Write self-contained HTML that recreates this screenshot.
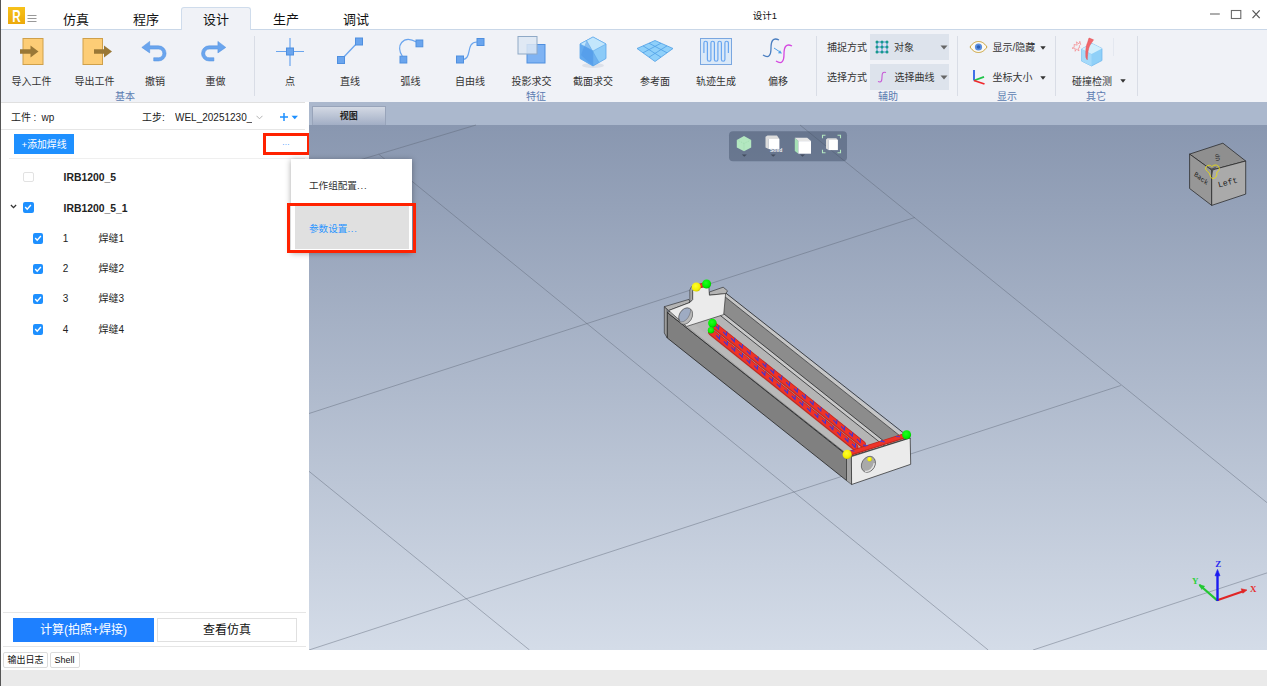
<!DOCTYPE html>
<html lang="zh-CN">
<head>
<meta charset="utf-8">
<title>设计1</title>
<style>
*{box-sizing:border-box;margin:0;padding:0}
html,body{width:1267px;height:686px;overflow:hidden;background:#fff}
body{font-family:"Liberation Sans","Noto Sans CJK SC",sans-serif;color:#222;position:relative;font-size:10px}
.abs{position:absolute}
#leftedge{left:0;top:0;width:1px;height:686px;background:#555;z-index:50}
#titlebar{left:0;top:0;width:1267px;height:30px;background:#fff;border-bottom:1px solid #c9d7e8}
.tab{position:absolute;top:7px;height:23px;width:70px;text-align:center;font-size:13px;line-height:25px;color:#111}
.tab.active{background:#f0f2f7;border:1px solid #cfdcec;border-bottom:none;border-radius:3px 3px 0 0;height:24px;line-height:23px}
#ribbon{left:0;top:30px;width:1267px;height:72px;background:#f0f2f7}
.rb{position:absolute;top:0;width:62px;height:73px;text-align:center}
.rb .lbl{position:absolute;left:-10px;right:-10px;top:46px;font-size:10px;line-height:12px;color:#333;text-align:center}
.rb svg{position:absolute;left:50%;top:4px;margin-left:-16px;overflow:visible}
.glabel{position:absolute;top:60.500px;font-size:10px;line-height:12px;color:#5b7bb0;width:40px;margin-left:-20px;text-align:center}
.rtxt{font-size:10px;line-height:12px;color:#333;white-space:nowrap}
.dd{width:79px;height:26px;background:#dde3ec}
.vsep{position:absolute;top:6px;width:1px;height:60px;background:#d9dde6}
#left{left:1px;top:102px;width:308px;height:548px;background:#fff}
#view{left:309px;top:102px;width:958px;height:547.500px;background:linear-gradient(#8997b0 0,#8997b0 23px,#d4dce8 100%);overflow:hidden}
#viewtabs{left:0;top:0;width:958px;height:23px;background:#abb8cd}

#left .t{position:absolute;font-size:10px;line-height:12px;white-space:nowrap;color:#222}
.hl{position:absolute;height:1px;background:#e6e6e6}
.cb{position:absolute;width:10.500px;height:10.500px;border-radius:2px}
.cb.on{background:#1e90ff}
.cb.off{border:1px solid #e2e2e2;background:#fff}
.cb.on svg{position:absolute;left:0;top:0}
.redbox{position:absolute;border:3px solid #ff2200}
#bottom{left:0;top:650px;width:1267px;height:20px;background:#fff}
.btab{top:2px;height:16px;border:1px solid #dcdcdc;border-radius:2px;font-size:9px;line-height:14px;text-align:center;color:#111;white-space:nowrap}
#status{left:0;top:670px;width:1267px;height:16px;background:#eaeaea}
</style>
</head>
<body>
<div id="titlebar" class="abs">
<div class="abs" style="left:8px;top:7px;width:17px;height:17px;background:linear-gradient(#f7c21a,#eca90c);color:#fff;font-weight:bold;font-size:15px;line-height:17px;text-align:center;font-family:'Liberation Sans',sans-serif"><span style="display:inline-block;transform:scale(0.780,1.150);transform-origin:50% 55%">R</span></div>
<svg class="abs" style="left:27px;top:14px" width="10" height="10" viewBox="0 0 10 10"><path d="M0.5 1.5h9M0.5 4.5h9M0.5 7.5h9" stroke="#999" stroke-width="1" fill="none"/></svg>
<div class="tab" style="left:41px">仿真</div>
<div class="tab" style="left:111px">程序</div>
<div class="tab active" style="left:181px">设计</div>
<div class="tab" style="left:251px">生产</div>
<div class="tab" style="left:321px">调试</div>
<div class="abs" style="left:735px;top:9px;width:60px;text-align:center;font-size:9.500px;line-height:13px;color:#111">设计1</div>
<svg class="abs" style="left:1206px;top:8px" width="58" height="14" viewBox="0 0 58 14"><g fill="none"><path d="M4 6h9.800" stroke="#8a8a8a" stroke-width="1.400"/><rect x="25.400" y="2.500" width="9.400" height="8" stroke="#6a6a6a" stroke-width="1.100"/><path d="M46.500 2.300l7.200 7.800M53.700 2.300l-7.200 7.800" stroke="#555" stroke-width="1.200"/></g></svg>
</div>
<div id="ribbon" class="abs">
<div class="rb" style="left:0.5px"><svg width="32" height="36" viewBox="0 0 32 36"><rect x="7" y="4.500" width="20" height="26" fill="#fdcd76" stroke="#cfa04a"/><path d="M4 15.300h10.500v-3.800l8 6-8 6v-3.800H4z" fill="#9a7836"/></svg><div class="lbl">导入工件</div></div>
<div class="rb" style="left:63.5px"><svg width="32" height="36" viewBox="0 0 32 36"><rect x="4" y="4.500" width="19.500" height="26" fill="#fdcd76" stroke="#cfa04a"/><path d="M15 15.300h10v-3.800l8 6-8 6v-3.800H15z" fill="#9a7836"/></svg><div class="lbl">导出工件</div></div>
<div class="rb" style="left:124px"><svg width="32" height="36" viewBox="0 0 32 36"><path d="M2.800 13.400L10.700 7.400V11.800H19.500A7.600 7.600 0 0 1 19.500 27H14.700V23.700H19.500A4.300 4.300 0 0 0 19.500 15.100H10.700V18.900Z" fill="#6aa5ee" stroke="#4f8fdf" stroke-width="0.500"/></svg><div class="lbl">撤销</div></div>
<div class="rb" style="left:184.5px"><svg width="32" height="36" viewBox="0 0 32 36"><path d="M 25.800 13.400 L 17.900 7.400 V 11.800 H 9.100 A 7.600 7.600 0 0 0 9.100 27 H 13.900 V 23.700 H 9.100 A 4.300 4.300 0 0 1 9.100 15.100 H 17.900 V 18.900 Z" fill="#6aa5ee" stroke="#4f8fdf" stroke-width="0.500"/></svg><div class="lbl">重做</div></div>
<div class="rb" style="left:259px"><svg width="32" height="36" viewBox="0 0 32 36"><path d="M2 17.5h28M16 4v28" stroke="#6aa5ee" stroke-width="1.2" fill="none"/><rect x="12.5" y="14" width="7" height="7" fill="#6aa5ee" stroke="#4f8fdf"/></svg><div class="lbl">点</div></div>
<div class="rb" style="left:319px"><svg width="32" height="36" viewBox="0 0 32 36"><path d="M7 26L25 7" stroke="#6aa5ee" stroke-width="1.3" fill="none"/><rect x="3.5" y="22.5" width="7" height="7" fill="#6aa5ee" stroke="#4f8fdf"/><rect x="21.500" y="4" width="7" height="7" fill="#6aa5ee" stroke="#4f8fdf"/></svg><div class="lbl">直线</div></div>
<div class="rb" style="left:379.5px"><svg width="32" height="36" viewBox="0 0 32 36"><path d="M7.500 22.500C0 12 8 0.500 21.500 8" stroke="#6aa5ee" stroke-width="1.200" fill="none"/><rect x="5" y="22.200" width="6.800" height="6.800" fill="#6aa5ee" stroke="#4f8fdf"/><rect x="21" y="6" width="6.800" height="6.800" fill="#6aa5ee" stroke="#4f8fdf"/></svg><div class="lbl">弧线</div></div>
<div class="rb" style="left:439px"><svg width="32" height="36" viewBox="0 0 32 36"><path d="M8 25.500C19 25.500 11 8 23 8" stroke="#6aa5ee" stroke-width="1.2" fill="none"/><rect x="2.500" y="22" width="7" height="7" fill="#6aa5ee" stroke="#4f8fdf"/><rect x="23" y="4.500" width="7" height="7" fill="#6aa5ee" stroke="#4f8fdf"/></svg><div class="lbl">自由线</div></div>
<div class="rb" style="left:500.5px"><svg width="32" height="36" viewBox="0 0 32 36"><rect x="11" y="10.500" width="18" height="18.500" fill="#7fb3f3" stroke="#4f8fdf"/><rect x="2" y="2.500" width="19" height="17.500" fill="#dde8f3" fill-opacity="0.85" stroke="#8fa9c6"/></svg><div class="lbl">投影求交</div></div>
<div class="rb" style="left:562px"><svg width="32" height="36" viewBox="0 0 32 36"><ellipse cx="16" cy="31.500" rx="11" ry="2.500" fill="#dde1e9"/><path d="M16 3L29 10v14.500L16 32 3 24.500V10z" fill="#8ccbf8" stroke="#5aa6ea" stroke-width="0.800"/><path d="M16 3L29 10 16 17 3 10z" fill="#c2e6fc" stroke="#5aa6ea" stroke-width="0.600"/><path d="M3 10L16 17V32L3 24.500z" fill="#62a9ef"/><path d="M9.500 6.500L22 28.500 16 32 4 21z" fill="#4b95e8" fill-opacity="0.500"/><path d="M16 17V32M9.500 6.500L22 28.500" stroke="#5aa6ea" stroke-width="0.600" fill="none"/></svg><div class="lbl">截面求交</div></div>
<div class="rb" style="left:624px"><svg width="38" height="36" viewBox="0 0 38 36" style="margin-left:-19px"><path d="M1 14.500L19 6.500 37 14.500 19 27.500z" fill="#8fd0fa" stroke="#4f9fe6" stroke-width="0.8"/><path d="M7 11.800L25 23.200M13 9.200L31 18.800M13 23.200L31 11.800M7 18.800L25 9.200" stroke="#4f9fe6" stroke-width="0.8" fill="none"/></svg><div class="lbl">参考面</div></div>
<div class="rb" style="left:685px"><svg width="34" height="36" viewBox="0 0 34 36" style="margin-left:-17px"><rect x="1.500" y="4.500" width="31" height="26" fill="#dbe9f8" stroke="#7aa7e0"/><path d="M4.900 19V9a1.75 1.75 0 0 1 3.5 0V25.500a1.75 1.75 0 0 0 3.5 0V9a1.75 1.75 0 0 1 3.5 0V25.500a1.75 1.75 0 0 0 3.5 0V9a1.75 1.75 0 0 1 3.5 0V25.500a1.75 1.75 0 0 0 3.5 0V9a1.75 1.75 0 0 1 3.5 0V19" stroke="#69a6f0" stroke-width="1.200" fill="none"/></svg><div class="lbl">轨迹生成</div></div>
<div class="rb" style="left:747px"><svg width="34" height="36" viewBox="0 0 34 36" style="margin-left:-17px"><path d="M2 21c6 4 8 0 8-7s2-11 8-8" stroke="#4a7ec0" stroke-width="1.300" fill="none"/><path d="M15 27c6 4 8 0 8-7s2-11 8-8" stroke="#d548e0" stroke-width="1.300" fill="none"/><path d="M13 14l6 4" stroke="#4f9fe6" stroke-width="1" fill="none"/><path d="M21 19.500l-4-0.300 2-3z" fill="#4f9fe6"/></svg><div class="lbl">偏移</div></div>
<div class="vsep" style="left:254px"></div><div class="vsep" style="left:816px"></div><div class="vsep" style="left:957px"></div><div class="vsep" style="left:1055px"></div><div class="vsep" style="left:1137px"></div>
<div class="glabel" style="left:125px">基本</div><div class="glabel" style="left:536px">特征</div><div class="glabel" style="left:888px">辅助</div><div class="glabel" style="left:1007px">显示</div><div class="glabel" style="left:1096px">其它</div>

<div class="abs rtxt" style="left:827px;top:12px">捕捉方式</div>
<div class="abs rtxt" style="left:827px;top:42px">选择方式</div>
<div class="abs dd" style="left:870px;top:4px"></div>
<div class="abs dd" style="left:870px;top:34px"></div>
<svg class="abs" style="left:875px;top:10px" width="14" height="14" viewBox="0 0 14 14"><path d="M2 2h10M2 7h10M2 12h10M2 2v10M7 2v10M12 2v10" stroke="#3f8fe0" stroke-width="0.9" fill="none"/><g fill="#17998a"><circle cx="2" cy="2" r="1.500"/><circle cx="7" cy="2" r="1.500"/><circle cx="12" cy="2" r="1.500"/><circle cx="2" cy="7" r="1.500"/><circle cx="7" cy="7" r="1.500"/><circle cx="12" cy="7" r="1.500"/><circle cx="2" cy="12" r="1.500"/><circle cx="7" cy="12" r="1.500"/><circle cx="12" cy="12" r="1.500"/></g></svg>
<div class="abs rtxt" style="left:894px;top:12px">对象</div>
<svg class="abs" style="left:940px;top:15px" width="8" height="5" viewBox="0 0 8 5"><path d="M0.500 0.500h7L4 4.500z" fill="#666"/></svg>
<svg class="abs" style="left:877px;top:40px" width="10" height="14" viewBox="0 0 10 14"><path d="M1 11.500c3.500 1.500 4-1 4-4.500s0.500-5.500 4-4.500" stroke="#c75ad6" stroke-width="1.100" fill="none"/></svg>
<div class="abs rtxt" style="left:894.500px;top:42px">选择曲线</div>
<svg class="abs" style="left:940px;top:45px" width="8" height="5" viewBox="0 0 8 5"><path d="M0.500 0.500h7L4 4.500z" fill="#666"/></svg>
<svg class="abs" style="left:969px;top:10px" width="19" height="14" viewBox="0 0 19 14"><path d="M1 7C4 2.500 7 1.500 9.500 1.500S15 2.500 18 7C15 11.500 12 12.500 9.500 12.500S4 11.500 1 7z" fill="#fdfaf2" stroke="#c9a035" stroke-width="1"/><circle cx="9.500" cy="7" r="3.600" fill="#5a8fe0"/><circle cx="9.500" cy="7" r="1.800" fill="#2c5fb8"/></svg>
<div class="abs rtxt" style="left:992.500px;top:12px">显示/隐藏</div>
<svg class="abs" style="left:1040px;top:16px" width="6" height="4" viewBox="0 0 6 4"><path d="M0.300 0.300h5.400L3 3.700z" fill="#333"/></svg>
<svg class="abs" style="left:971px;top:38px" width="16" height="18" viewBox="0 0 16 18"><path d="M3 2v10.500" stroke="#2d62e6" stroke-width="1.800" fill="none"/><path d="M3 12.500l10-3.700" stroke="#1fc44a" stroke-width="1.800" fill="none"/><path d="M3 12.500l10.500 3.500" stroke="#f0282d" stroke-width="1.800" fill="none"/></svg>
<div class="abs rtxt" style="left:992.500px;top:42px">坐标大小</div>
<svg class="abs" style="left:1040px;top:46px" width="6" height="4" viewBox="0 0 6 4"><path d="M0.300 0.300h5.400L3 3.700z" fill="#333"/></svg>
<svg class="abs" style="left:1072px;top:5px" width="34" height="34" viewBox="0 0 34 34"><path d="M9.500 14l10.500-5.500 10 5v12L19.500 31 9.500 26z" fill="#8fd0f8" stroke="#6ab4ee" stroke-width="0.700"/><path d="M9.500 14l10.500-5.500 10 5-10.500 5.500z" fill="#d2effd"/><path d="M9.500 14l10 5.500V31l-10-5z" fill="#a5dafa"/><path d="M17 3l4.500 1.800-3 4.500c-2 3-2.800 7-3.300 15.500l-1.300-2.500c-0.300-7 0-11 1.800-15z" fill="#f2666b" stroke="#e0484e" stroke-width="0.500"/><path d="M2 9.500l3.200 0.600-0.800-3.200 2.600 2 0.800-2.600 1 3-1.600 1.600 0.600 1.600-1.600 0.600 0.800 2.800-2.600-1.800-1.200 2.200-0.200-3.200-3 0.200 2.400-1.800z" stroke="#f5868b" stroke-width="0.700" fill="none" stroke-linejoin="round"/></svg>
<div class="abs" style="left:1113px;top:8px;width:1px;height:18px;background:#e4e8f0"></div>
<div class="abs rtxt" style="left:1072px;top:45.500px">碰撞检测</div>
<svg class="abs" style="left:1120px;top:49px" width="6" height="4" viewBox="0 0 6 4"><path d="M0.300 0.300h5.400L3 3.700z" fill="#333"/></svg>

</div>
<div id="left" class="abs">
<div class="hl" style="left:0;top:0;width:304px;background:#e0e0e0"></div><div class="t" style="left:10px;top:9.5px">工件<span style="margin-left:2.500px;margin-right:2.500px">:</span> wp</div><div class="t" style="left:141px;top:9.5px">工步:</div><div class="t" style="left:174px;top:9.5px;width:77px;overflow:hidden">WEL_20251230_1</div><svg class="abs" style="left:255px;top:13px" width="7" height="5" viewBox="0 0 7 5"><path d="M0.500 0.800l3 3 3-3" stroke="#aaa" stroke-width="0.900" fill="none"/></svg><svg class="abs" style="left:278px;top:10px" width="20" height="10" viewBox="0 0 20 10"><path d="M1 5h8M5 1v8" stroke="#1e90ff" stroke-width="1.500" fill="none"/><path d="M12.500 3.800h6.500l-3.250 3.400z" fill="#1e90ff"/></svg><div class="hl" style="left:0;top:27px;width:304px"></div><div class="abs" style="left:13px;top:32px;width:60px;height:20px;background:#1e90ff;color:#fff;font-size:9.800px;line-height:22px;text-align:center;white-space:nowrap">+添加焊线</div><div class="redbox" style="left:262px;top:30.500px;width:46.500px;height:22.500px"></div><div class="abs" style="left:275px;top:35px;width:20px;text-align:center;color:#1e90ff;font-size:8px;line-height:12px;letter-spacing:0.300px">...</div><div class="hl" style="left:8px;top:55.5px;width:296px;background:#efefef"></div><div class="cb off" style="left:22px;top:69.500px"></div><div class="t" style="left:62.5px;top:70px;font-weight:bold;font-size:10.400px">IRB1200_5</div><svg class="abs" style="left:9px;top:102px" width="7" height="5" viewBox="0 0 7 5"><path d="M0.900 1l2.600 2.600 2.600-2.600" stroke="#333" stroke-width="1.300" fill="none"/></svg><div class="cb on" style="left:22px;top:100px"><svg width="10" height="10" viewBox="0 0 10 10"><path d="M2.200 5l2 2.200 3.700-4.200" stroke="#fff" stroke-width="1.400" fill="none"/></svg></div><div class="t" style="left:62.5px;top:100.500px;font-weight:bold;font-size:10.400px">IRB1200_5_1</div><div class="cb on" style="left:31.799999999999997px;top:131.30px"><svg width="10" height="10" viewBox="0 0 10 10"><path d="M2.200 5l2 2.200 3.700-4.200" stroke="#fff" stroke-width="1.400" fill="none"/></svg></div><div class="t" style="left:61.8px;top:130.80px;font-size:10px">1</div><div class="t" style="left:97.5px;top:130.80px;font-size:10px">焊缝1</div><div class="cb on" style="left:31.799999999999997px;top:161.55px"><svg width="10" height="10" viewBox="0 0 10 10"><path d="M2.200 5l2 2.200 3.700-4.200" stroke="#fff" stroke-width="1.400" fill="none"/></svg></div><div class="t" style="left:61.8px;top:161.05px;font-size:10px">2</div><div class="t" style="left:97.5px;top:161.05px;font-size:10px">焊缝2</div><div class="cb on" style="left:31.799999999999997px;top:191.80px"><svg width="10" height="10" viewBox="0 0 10 10"><path d="M2.200 5l2 2.200 3.700-4.200" stroke="#fff" stroke-width="1.400" fill="none"/></svg></div><div class="t" style="left:61.8px;top:191.30px;font-size:10px">3</div><div class="t" style="left:97.5px;top:191.30px;font-size:10px">焊缝3</div><div class="cb on" style="left:31.799999999999997px;top:222.05px"><svg width="10" height="10" viewBox="0 0 10 10"><path d="M2.200 5l2 2.200 3.700-4.200" stroke="#fff" stroke-width="1.400" fill="none"/></svg></div><div class="t" style="left:61.8px;top:221.55px;font-size:10px">4</div><div class="t" style="left:97.5px;top:221.55px;font-size:10px">焊缝4</div><div class="hl" style="left:2px;top:510px;width:303px"></div><div class="abs" style="left:12px;top:516px;width:141px;height:24px;background:#1e80ff;color:#fff;font-size:12px;line-height:25px;text-align:center">计算(拍照+焊接)</div><div class="abs" style="left:156px;top:516px;width:140px;height:24px;background:#fff;border:1px solid #e0e0e0;color:#111;font-size:12px;line-height:23px;text-align:center">查看仿真</div><div class="hl" style="left:2px;top:544px;width:303px"></div>
</div>
<div id="view" class="abs">
<div id="viewtabs" class="abs"><div id="vtab" class="abs" style="left:3px;top:4px;width:73.500px;height:19px;background:linear-gradient(#d3d9e4,#a2aec5);border:1px solid #98a4ba;border-bottom:none;border-radius:1px 1px 0 0;font-size:9px;font-weight:bold;line-height:19px;text-align:center;color:#222">视图</div></div>
<!--VIEW-S--><svg class="abs" style="left:0;top:0" width="958" height="548" viewBox="309 102 958 548">
<defs>
<radialGradient id="gy" cx="0.42" cy="0.38" r="0.65"><stop offset="0" stop-color="#ffff30"/><stop offset="0.7" stop-color="#f4f000"/><stop offset="1" stop-color="#c4c000"/></radialGradient>
<radialGradient id="gg" cx="0.42" cy="0.38" r="0.65"><stop offset="0" stop-color="#20ff20"/><stop offset="0.7" stop-color="#00ee00"/><stop offset="1" stop-color="#00b400"/></radialGradient>
</defs>
<g fill="none" stroke="#5c6675" stroke-opacity="0.55" stroke-width="0.8">
<path d="M309 175.2L476 125"/>
<path d="M309 413.5L914.7 217.5"/>
<path d="M309 650L1120.8 385.5"/>
<path d="M1033 650L1267 572.9"/>
<path d="M309 471.3L529.5 650"/>
<path d="M378.8 154.3L988.2 650"/>
<path d="M800 125L1267 502.7"/>
</g>
<g id="model">
<polygon points="667.2,312.4 846.5,455.0 846.5,480.5 667.2,337.9" fill="#808080" stroke="#222" stroke-width="0.8" stroke-linejoin="round"/>
<polygon points="664.3,306.7 667.2,309.3 667.2,337.9 664.3,333.0" fill="#9c9c9c" stroke="#222" stroke-width="0.6" stroke-linejoin="round"/>
<polygon points="664.3,306.7 688.9,299.4 690.0,302.4 668.7,310.5" fill="#b4b4b4" stroke="#222" stroke-width="0.6" stroke-linejoin="round"/>
<clipPath id="inr"><polygon points="667.2,312.4 849.5,456.6 910.2,438.2 723.4,291.2"/></clipPath>
<g clip-path="url(#inr)">
<polygon points="640.0,290.8 930.0,521.4 930.0,482.2 640.0,251.6" fill="#b5b5b5"/>
<polygon points="640.0,290.8 930.0,521.4 930.0,511.7 640.0,281.1" fill="#b9b9b9"/>
<polygon points="640.0,251.6 930.0,482.2 930.0,477.8 640.0,247.2" fill="#c9c9c9"/>
<polygon points="640.0,247.2 930.0,477.8 930.0,459.8 640.0,229.2" fill="#8c8c8c"/>
<polygon points="640.0,229.2 930.0,459.8 930.0,455.4 640.0,224.9" fill="#c6c6c6"/>
<line x1="640.0" y1="251.6" x2="930.0" y2="482.2" stroke="#2a2a2a" stroke-width="0.8"/>
<line x1="640.0" y1="247.2" x2="930.0" y2="477.8" stroke="#2a2a2a" stroke-width="0.8"/>
<line x1="640.0" y1="229.2" x2="930.0" y2="459.8" stroke="#2a2a2a" stroke-width="0.7"/>
<line x1="640.0" y1="289.2" x2="930.0" y2="519.8" stroke="#8a8a8a" stroke-width="0.5"/>
</g>
<polygon points="667.2,312.4 849.5,456.6 910.2,438.2 723.4,291.2" fill="none" stroke="#222" stroke-width="0.8" stroke-linejoin="round"/>
<polygon points="689.8,299.2 689.8,290.0 691.5,286.6 694.5,285.2 697.0,287.2 694.2,288.4 692.7,291.2 692.7,299.6 690.0,302.4" fill="#a8a8a8" stroke="#222" stroke-width="0.5" stroke-linejoin="round"/>
<polygon points="709.4,295.2 709.4,292.0 723.2,287.2 727.6,290.9 725.6,293.6" fill="#b4b4b4" stroke="#222" stroke-width="0.6" stroke-linejoin="round"/>
<polygon points="668.7,310.5 690.0,302.4 692.7,299.6 692.7,291.2 694.2,288.4 697.0,287.2 708.0,286.6 708.9,288.2 709.4,295.2 725.6,293.6 723.7,314.6 686.7,326.4" fill="#ebebeb" stroke="#222" stroke-width="0.6" stroke-linejoin="round"/>
<g transform="translate(685.6 316) rotate(28)"><ellipse rx="6.4" ry="8.6" fill="#9eabc2" stroke="#444" stroke-width="0.6"/><path d="M1 -8.500A6.400 8.600 0 0 1 1 8.500A6.400 9 0 0 1 -4.800 5.600A3.600 6.400 0 0 0 1 -8.500z" fill="#b9b9b9" stroke="#555" stroke-width="0.400"/></g>
<line x1="711.5" y1="332.4" x2="855.0" y2="447.2" stroke="#bf2a20" stroke-width="6.6" stroke-linecap="round"/>
<line x1="711.5" y1="332.1" x2="855.0" y2="446.9" stroke="#ee3328" stroke-width="4.8" stroke-linecap="round"/>
<line x1="713.0" y1="324.6" x2="862.5" y2="444.2" stroke="#bf2a20" stroke-width="6.6" stroke-linecap="round"/>
<line x1="713.0" y1="324.3" x2="862.5" y2="443.9" stroke="#ee3328" stroke-width="4.8" stroke-linecap="round"/>
<g fill="none" stroke="#3f36d6" stroke-width="1.1"><path d="M715.3 325.5L718.5 329.1L718.9 325.1" /><path d="M716.3 335.3L719.5 338.9L719.9 334.9" /><path d="M723.2 331.8L726.4 335.4L726.8 331.4" /><path d="M723.9 341.4L727.1 345.0L727.5 341.0" /><path d="M731.1 338.1L734.3 341.7L734.7 337.7" /><path d="M731.4 347.4L734.6 351.0L735.0 347.0" /><path d="M738.9 344.4L742.1 348.0L742.5 344.0" /><path d="M739.0 353.5L742.2 357.1L742.6 353.1" /><path d="M746.8 350.7L750.0 354.3L750.4 350.3" /><path d="M746.5 359.5L749.7 363.1L750.1 359.1" /><path d="M754.7 357.0L757.9 360.6L758.3 356.6" /><path d="M754.1 365.5L757.3 369.1L757.7 365.1" /><path d="M762.5 363.3L765.7 366.9L766.1 362.9" /><path d="M761.6 371.6L764.8 375.2L765.2 371.2" /><path d="M770.4 369.6L773.6 373.2L774.0 369.2" /><path d="M769.2 377.6L772.4 381.2L772.8 377.2" /><path d="M778.3 375.9L781.5 379.5L781.9 375.5" /><path d="M776.7 383.7L779.9 387.3L780.3 383.3" /><path d="M786.1 382.2L789.4 385.8L789.8 381.8" /><path d="M784.3 389.7L787.5 393.3L787.9 389.3" /><path d="M794.0 388.5L797.2 392.1L797.6 388.1" /><path d="M791.8 395.8L795.0 399.4L795.4 395.4" /><path d="M801.9 394.8L805.1 398.4L805.5 394.4" /><path d="M799.4 401.8L802.6 405.4L803.0 401.4" /><path d="M809.8 401.1L813.0 404.7L813.4 400.7" /><path d="M807.0 407.8L810.2 411.4L810.6 407.4" /><path d="M817.6 407.4L820.8 411.0L821.2 407.0" /><path d="M814.5 413.9L817.7 417.5L818.1 413.5" /><path d="M825.5 413.7L828.7 417.3L829.1 413.3" /><path d="M822.1 419.9L825.3 423.5L825.7 419.5" /><path d="M833.4 420.0L836.6 423.6L837.0 419.6" /><path d="M829.6 426.0L832.8 429.6L833.2 425.6" /><path d="M841.2 426.3L844.4 429.9L844.8 425.9" /><path d="M837.2 432.0L840.4 435.6L840.8 431.6" /><path d="M849.1 432.6L852.3 436.2L852.7 432.2" /><path d="M844.7 438.1L847.9 441.7L848.3 437.7" /><path d="M857.0 438.9L860.2 442.5L860.6 438.5" /><path d="M852.0 443.9L855.2 447.5L855.6 443.5" /></g>
<line x1="848.5" y1="453.8" x2="905.5" y2="435.6" stroke="#bf2a20" stroke-width="5.2" stroke-linecap="round"/>
<line x1="848.5" y1="453.5" x2="905.5" y2="435.3" stroke="#ee3328" stroke-width="3.4000000000000004" stroke-linecap="round"/>
<g fill="none" stroke="#4a3ad0" stroke-width="0.9"><path d="M851 450.5l3.5 0.8M866 446.5l-3 -1.5 5 0.6M880 441.5l4.5 0.3-3.500 -1.500M896 436.500l4 0.3"/></g>
<line x1="697.0" y1="286.8" x2="706.0" y2="284.2" stroke="#bf2a20" stroke-width="4.6" stroke-linecap="round"/>
<line x1="697.0" y1="286.5" x2="706.0" y2="283.9" stroke="#ee3328" stroke-width="2.8" stroke-linecap="round"/>
<polygon points="846.5,455.4 851.4,456.6 851.6,484.5 846.5,480.7" fill="#a4a4a4" stroke="#222" stroke-width="0.5" stroke-linejoin="round"/>
<polygon points="851.4,456.6 910.2,438.0 910.7,464.3 851.6,484.5" fill="#ebebeb" stroke="#222" stroke-width="0.7" stroke-linejoin="round"/>
<g transform="translate(868.4 464.3) rotate(30)"><ellipse rx="6.6" ry="8.4" fill="#a9a9a9" stroke="#444" stroke-width="0.6"/><path d="M-1 -8.2A6.6 8.4 0 0 0 -1 8.2A5 8 0 0 1 -1 -8.2z" fill="#8a8a8a"/><path d="M0.5 7.6A5.6 7.6 0 0 0 4.500 -4" fill="none" stroke="#e4e4e4" stroke-width="1.3"/></g>
<circle cx="869.6" cy="459.2" r="2.3" fill="url(#gy)"/>
<circle cx="696.3" cy="287.0" r="4.6" fill="url(#gy)"/>
<circle cx="706.6" cy="284.0" r="4.5" fill="url(#gg)"/>
<circle cx="712.4" cy="323.1" r="4.3" fill="url(#gg)"/>
<circle cx="711.0" cy="330.2" r="3.2" fill="url(#gg)"/>
<circle cx="847.2" cy="454.4" r="4.6" fill="url(#gy)"/>
<circle cx="906.6" cy="434.8" r="4.5" fill="url(#gg)"/>
</g>
<g id="vtool">
<rect x="729" y="131.200" width="118" height="30" rx="4" fill="rgb(60,75,100)" fill-opacity="0.45"/>
<path d="M744 136.100l7.200 3.800v7.600l-7.200 3.800-7.200-3.800v-7.600z" fill="#b3e7c0"/>
<path d="M744 143.500v7.500M737.500 140.200l6.500 3.300 6.500-3.300" stroke="#96d3a6" stroke-width="0.600" fill="none" stroke-dasharray="1 1"/>
<path d="M741.800 154.600h5l-2.500 2.200z" fill="#434d5f"/>
<path d="M765.500 136.800l2-1.200h9.500l2.400 3.300h-10.800v10.200l-3.100-1.600z" fill="#dcdcdc"/>
<rect x="768.600" y="138.900" width="10.800" height="10.200" fill="#fff"/>
<text x="770" y="151.600" font-family="Liberation Sans, sans-serif" font-size="5" font-weight="bold" fill="#f2f4f8">Solid</text>
<path d="M770.700 154.600h5l-2.500 2.200z" fill="#434d5f"/>
<path d="M794.800 137.800l3.600 3.300v12.600l-3.600-2.800z" fill="#a6e0b5"/>
<path d="M794.800 137.800h12.400l3.800 3.300h-12.600z" fill="#e6e6e6"/>
<rect x="798.400" y="141.100" width="12.600" height="12.600" fill="#fff"/>
<path d="M800 154.600h5l-2.500 2.200z" fill="#434d5f"/>
<path d="M822.500 138.200v-3h3M837.500 135.200h3v3M840.500 149.800v3h-3M825.500 152.800h-3v-3" stroke="#b3e7c0" stroke-width="1.100" fill="none"/>
<path d="M826 139.500l1.500-1.300h8.800l1.600 1.700h-9.400v10.200l-2.500-1.500z" fill="#dcdcdc"/>
<rect x="828.500" y="139.900" width="9.400" height="10.200" fill="#fff"/>
</g>
<g id="navcube" stroke="#1c1c1c" stroke-width="0.700" stroke-linejoin="round">
<path d="M1222.900 143.200L1245.700 161 1211.700 170.100 1189.600 154.100z" fill="#8f8f8f"/>
<path d="M1189.600 154.100L1211.700 170.100V205.400L1189.600 188.500z" fill="#979797"/>
<path d="M1211.700 170.100L1245.700 161V194.100L1211.700 205.400z" fill="#aaaaaa"/>
</g>
<g font-family="Liberation Mono, monospace" fill="#1e1e1e" font-size="8.300">
<text transform="translate(1218.800 187.500) rotate(-15)">Left</text>
<text transform="translate(1193.800 175.500) rotate(38) skewX(12)" font-size="6.800">Back</text>
<text transform="translate(1220 160.500) rotate(-105)" font-size="6">Up</text>
</g>
<path d="M1211.700 170.100l-4.200-3 4.400 1.500 4.600-2.200-3.200 3.800-1.600 6.500z" fill="#4e4e4e"/>
<path d="M1205.600 167.600q1.200-2.600 3.600-2.400 1.800 0.200 2.600 1.400 1.800-2 4.600-1.600 2.800 0.800 3 3.600 0 2.400-2.600 3.600 0.600 2.800-1 5-1.400 1.800-3.600 1.200-2-0.800-2.200-3.400-0.200-2-2.600-3.600-2.200-1.600-1.800-3.800z" fill="none" stroke="#e6da12" stroke-width="0.900"/>
<g id="triad">
<path d="M1217.200 600.300L1199.500 585" stroke="#22c832" stroke-width="2.200"/>
<path d="M1199 584.600l5.600 1.600-2.800 3.200z" fill="#22c832" stroke="#22c832" stroke-width="0.600"/>
<path d="M1217.200 600.300L1244 591" stroke="#e02626" stroke-width="2.200"/>
<path d="M1247 590l-5.800-1.200 1.600 4.400z" fill="#e02626" stroke="#e02626" stroke-width="0.600"/>
<path d="M1217.500 601V573" stroke="#1c1cf0" stroke-width="2.400"/>
<path d="M1217.500 569.400l-2.500 6.400h5z" fill="#1c1cf0" stroke="#1c1cf0" stroke-width="0.600"/>
<g font-family="Liberation Serif, serif" font-size="9" font-weight="bold" text-anchor="middle">
<text x="1218.200" y="567.200" fill="#2a2af0">Z</text>
<text x="1253.200" y="591.600" fill="#e63030">X</text>
<text x="1195.200" y="584.400" fill="#30d040">Y</text>
</g>
</g>

</svg><!--VIEW-E-->
</div>

<div id="popup" class="abs" style="left:291px;top:159px;width:121px;height:93px;background:#fff;box-shadow:0 1px 6px rgba(0,0,0,0.35);z-index:20">
<div class="abs" style="left:18px;top:20.500px;font-size:9.600px;line-height:12px;color:#333;white-space:nowrap">工作组配置<span style="letter-spacing:0.800px">...</span></div>
<div class="abs" style="left:3.500px;top:47px;width:114px;height:43px;background:#e0e0e0"></div>
<div class="abs" style="left:18px;top:64px;font-size:9.600px;line-height:12px;color:#2b95ff;white-space:nowrap">参数设置<span style="letter-spacing:0.800px">...</span></div>
</div>
<div class="redbox" style="left:286.500px;top:203px;width:129px;height:49.500px;z-index:21"></div>
<div id="bottom" class="abs">
<div class="abs btab" style="left:3px;width:45px">输出日志</div>
<div class="abs btab" style="left:49.500px;width:30px">Shell</div>
</div>
<div id="status" class="abs"></div>
<div id="leftedge" class="abs"></div>
</body>
</html>
